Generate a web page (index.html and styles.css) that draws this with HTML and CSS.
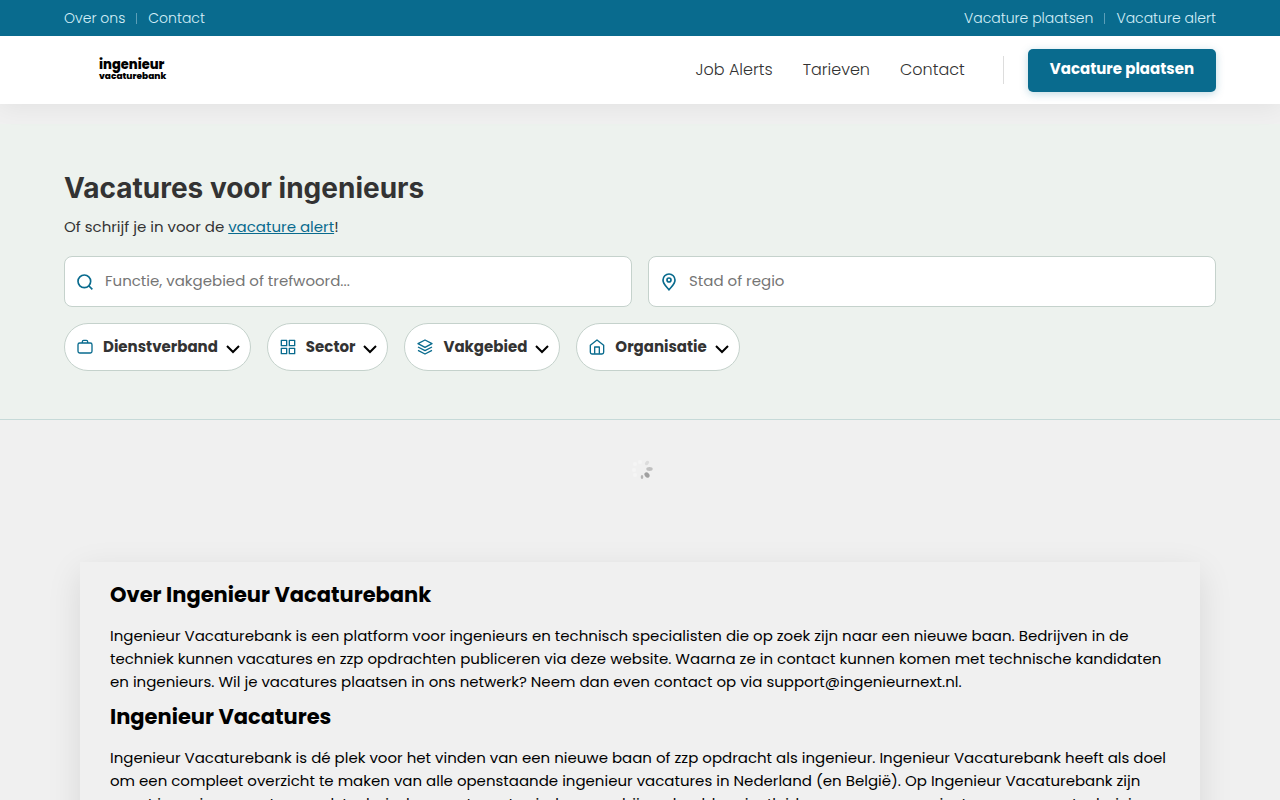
FILE: index.html
```
<!DOCTYPE html>
<html lang="nl">
<head>
    <meta charset="UTF-8">
    <meta name="viewport" content="width=device-width, initial-scale=1">
    <title>Ingenieur Vacaturebank</title>
    <link rel="stylesheet" href="styles.css">
</head>
<body>
<div class="topbar">
    <nav class="container topbar-inner" aria-label="Topbar">
        <div class="topbar-links">
            <a href="#">Over ons</a>
            <span class="sep"></span>
            <a href="#">Contact</a>
        </div>
        <div class="topbar-links">
            <a href="#">Vacature plaatsen</a>
            <span class="sep"></span>
            <a href="#">Vacature alert</a>
        </div>
    </nav>
</div>

<header class="header">
    <div class="container header-inner">
        <a class="logo" href="#">
            <span class="logo-top">ingenieur</span>
            <span class="logo-bottom">vacaturebank</span>
        </a>
        <nav class="menu">
            <a href="#">Job Alerts</a>
            <a href="#">Tarieven</a>
            <a href="#">Contact</a>
            <span class="menu-divider"></span>
            <a class="btn-primary" href="#">Vacature plaatsen</a>
        </nav>
    </div>
</header>

<section class="search">
    <form class="container">
        <h1>Vacatures voor ingenieurs</h1>
        <p class="intro">Of schrijf je in voor de <a href="#">vacature alert</a>!</p>

        <div class="fields">
            <label class="field">
                <svg class="icon" viewBox="0 0 24 24"><circle cx="11" cy="11" r="9.500"/><path d="M18 18L23 23"/></svg>
                <input type="text" placeholder="Functie, vakgebied of trefwoord..." aria-label="Functie">
            </label>
            <label class="field">
                <svg class="icon" viewBox="0 0 24 24"><path d="M12 24c-2-4-9-8-9-15a9 9 0 0 1 18 0c0 7-7 11-9 15z"/><circle cx="12" cy="9" r="3"/></svg>
                <input type="text" placeholder="Stad of regio" aria-label="Locatie">
            </label>
        </div>

        <div class="filters">
            <button type="button" class="filter">
                <svg class="icon" viewBox="0 0 24 24"><rect x="1.500" y="6" width="21" height="15" rx="2.500"/><path d="M8 6V4a2 2 0 0 1 2-2h4a2 2 0 0 1 2 2v2"/></svg>
                Dienstverband
                <svg class="chevron" viewBox="0 0 14 9"><path d="M1 1l6 6 6-6"/></svg>
            </button>
            <button type="button" class="filter">
                <svg class="icon" viewBox="0 0 24 24"><path d="M2 2h8v8H2zM14 2h8v8h-8zM2 14h8v8H2zM14 14h8v8h-8z"/></svg>
                Sector
                <svg class="chevron" viewBox="0 0 14 9"><path d="M1 1l6 6 6-6"/></svg>
            </button>
            <button type="button" class="filter">
                <svg class="icon" viewBox="0 0 24 24"><path d="M12 1.500L1.500 7 12 12.500 22.500 7z"/><path d="M1.500 12L12 17.500 22.500 12"/><path d="M1.500 17L12 22.500 22.500 17"/></svg>
                Vakgebied
                <svg class="chevron" viewBox="0 0 14 9"><path d="M1 1l6 6 6-6"/></svg>
            </button>
            <button type="button" class="filter">
                <svg class="icon" viewBox="0 0 24 24"><path d="M2 9.500L12 1.500l10 8V20a2.500 2.500 0 0 1-2.500 2.500h-15A2.500 2.500 0 0 1 2 20z"/><path d="M8.500 22V12h7v10"/></svg>
                Organisatie
                <svg class="chevron" viewBox="0 0 14 9"><path d="M1 1l6 6 6-6"/></svg>
            </button>
        </div>
    </form>
</section>

<div class="loader">
    <svg width="28" height="20" viewBox="0 0 28 20">
        <g fill="#f5f5f5">
            <circle cx="14" cy="2" r="2"/>
            <circle cx="9" cy="4" r="2"/>
            <circle cx="8" cy="10" r="2"/>
            <circle cx="9" cy="15" r="2"/>
        </g>
        <ellipse cx="21" cy="3" rx="2.500" ry="1.700" fill="#dcdcdc" transform="rotate(-55 21 3)"/>
        <ellipse cx="23.500" cy="9" rx="3.200" ry="1.900" fill="#c0c0c0"/>
        <ellipse cx="21" cy="15" rx="3" ry="2.200" fill="#a0a0a0" transform="rotate(50 21 15)"/>
        <ellipse cx="16" cy="17" rx="1.300" ry="2" fill="#b5b5b5"/>
    </svg>
</div>

<main class="about">
    <h2>Over Ingenieur Vacaturebank</h2>
    <p>Ingenieur Vacaturebank is een platform voor ingenieurs en technisch specialisten die op zoek zijn naar een nieuwe baan. Bedrijven in de techniek kunnen vacatures en zzp opdrachten publiceren via deze website. Waarna ze in contact kunnen komen met technische kandidaten en ingenieurs. Wil je vacatures plaatsen in ons netwerk? Neem dan even contact op via support@ingenieurnext.nl.</p>
    <h2>Ingenieur Vacatures</h2>
    <p>Ingenieur Vacaturebank is dé plek voor het vinden van een nieuwe baan of zzp opdracht als ingenieur. Ingenieur Vacaturebank heeft als doel om een compleet overzicht te maken van alle openstaande ingenieur vacatures in Nederland (en België). Op Ingenieur Vacaturebank zijn naast ingenieur vacatures ook technische vacatures te vinden, voor bijvoorbeeld projectleiders, managers, projectmanagers en technici.</p>
</main>
</body>
</html>
```
FILE: styles.css
```
* {
    box-sizing: border-box;
}

body {
    margin: 0;
    background: #f0f0f0;
    color: #000;
    font-family: Poppins, Inter, sans-serif;
    font-size: 15px;
}

a {
    color: inherit;
    text-decoration: none;
}

.container {
    max-width: 1280px;
    margin: 0 auto;
    padding: 0 64px;
}

.topbar {
    position: relative;
    z-index: 2;
    background: #096b8e;
    color: #d5eff8;
    font-size: 14px;
    font-weight: 300;
}

.topbar-inner {
    display: flex;
    justify-content: space-between;
    align-items: center;
    height: 36px;
}

.topbar-links {
    display: flex;
    align-items: center;
    gap: 11px;
}

.sep {
    width: 1px;
    height: 11px;
    background: #5c9fb8;
}

.header {
    position: relative;
    margin-bottom: 20px;
    background: #fff;
    box-shadow: 0 4px 24px rgba(0, 0, 0, 0.06);
}

.header-inner {
    display: flex;
    justify-content: space-between;
    align-items: center;
    height: 68px;
}

.logo {
    display: flex;
    flex-direction: column;
    margin-left: 35px;
    font-weight: 800;
}

.logo-top {
    font-size: 13px;
    line-height: 13px;
}

.logo-bottom {
    font-size: 9px;
    line-height: 11px;
}

.menu {
    display: flex;
    align-items: center;
    gap: 30px;
    color: #333;
    font-size: 16px;
    font-weight: 300;
    line-height: 22px;
}

.menu-divider {
    width: 1px;
    height: 28px;
    margin: 0 -6px 0 8px;
    background: #ddd;
}

.btn-primary {
    padding: 9px 22px 12px;
    border-radius: 5px;
    background: #096b8e;
    box-shadow: 0 2px 8px rgba(9, 107, 142, 0.25);
    color: #fff;
    font-size: 15px;
    font-weight: 700;
}

.search {
    padding: 44px 0 48px;
    border-bottom: 1px solid #c6dad8;
    background: #edf2ee;
    color: #333;
}

h1 {
    margin: 0 0 8px;
    font-family: Inter, sans-serif;
    font-size: 28px;
    line-height: 40px;
}

.intro {
    margin: 0 0 18px;
    line-height: 22px;
}

.intro a {
    color: #096b8e;
    text-decoration: underline;
}

.fields {
    display: flex;
    gap: 16px;
    margin-bottom: 16px;
}

.field {
    display: flex;
    flex: 1;
    align-items: center;
    gap: 12px;
    height: 51px;
    padding: 0 12px;
    border: 1px solid #c5d2cc;
    border-radius: 8px;
    background: #fff;
}

.field input {
    flex: 1;
    padding: 0 0 2px;
    border: 0;
    outline: 0;
    background: none;
    font: inherit;
}

.field input::placeholder {
    color: #757575;
}

.icon {
    width: 16px;
    height: 16px;
    fill: none;
    stroke: #096b8e;
    stroke-width: 2;
    stroke-linejoin: round;
}

.field .icon {
    overflow: visible;
    stroke-width: 2.5;
}

.filters {
    display: flex;
    flex-wrap: wrap;
    gap: 16px;
}

.filter {
    display: flex;
    align-items: center;
    gap: 10px;
    height: 48px;
    padding: 0 10px 1px 12px;
    border: 1px solid #c5d2cc;
    border-radius: 24px;
    background: #fff;
    color: #333;
    font: inherit;
    font-weight: 700;
}

.chevron {
    width: 14px;
    height: 9px;
    margin: 6px 0 0 -2px;
    fill: none;
    stroke: #000;
    stroke-width: 2;
}

.loader {
    display: flex;
    justify-content: center;
    padding: 40px 0 82px;
}

.about {
    max-width: 1120px;
    margin: 0 auto;
    padding: 18px 30px;
    box-shadow: 0 10px 32px rgba(0, 0, 0, 0.1);
}

.about h2 {
    margin: 0;
    font-size: 21px;
    font-weight: 700;
    line-height: 30px;
}

.about p {
    margin: 14px 0 9px;
    line-height: 23px;
}
```
